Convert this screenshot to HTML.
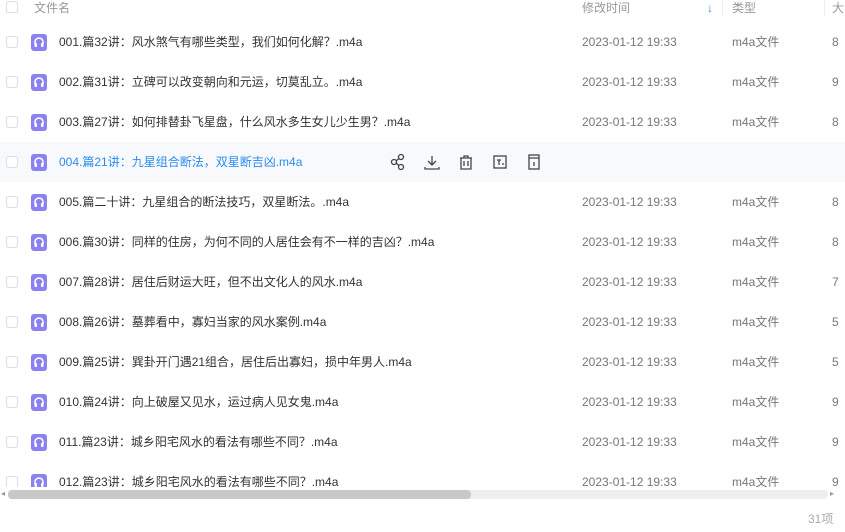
<!DOCTYPE html>
<html><head><meta charset="utf-8"><style>
*{margin:0;padding:0;box-sizing:border-box}
body{width:845px;height:532px;overflow:hidden;background:#fff;font-family:"Liberation Sans","Noto Sans CJK SC",sans-serif;font-size:12px;line-height:16px;color:#333;position:relative}
.a{position:absolute;white-space:nowrap;line-height:16px}
.cb{position:absolute;left:6px;width:12px;height:12px;border:1px solid #dcdfe6;border-radius:2px;background:#fff}
.ic{position:absolute;left:31px;width:16px;height:17px;background:#8b82f0;border-radius:3px}
.ic svg{position:absolute;left:2px;top:2px}
.h{color:#999}
.d{color:#777;left:582px}
.t{color:#777;left:732px}
.s{color:#777;left:832px}
</style></head><body>
<div class="a" style="left:0;top:142px;width:845px;height:40px;background:#f8f9fc"></div>
<div class="cb" style="top:1px"></div>
<div class="a h" style="left:34px;top:0px">文件名</div>
<div class="a h" style="left:582px;top:0px">修改时间</div>
<div class="a" style="left:707px;top:0px;color:#2a8cf0">↓</div>
<div class="a" style="left:722px;top:0;width:1px;height:16px;background:#eee"></div>
<div class="a h" style="left:732px;top:0px">类型</div>
<div class="a" style="left:824px;top:0;width:1px;height:16px;background:#eee"></div>
<div class="a h" style="left:832px;top:0px">大</div>

<div id="rows"></div>
<script>
var n=["001.篇32讲：风水煞气有哪些类型，我们如何化解？.m4a","002.篇31讲：立碑可以改变朝向和元运，切莫乱立。.m4a","003.篇27讲：如何排替卦飞星盘，什么风水多生女儿少生男？.m4a","004.篇21讲：九星组合断法，双星断吉凶.m4a","005.篇二十讲：九星组合的断法技巧，双星断法。.m4a","006.篇30讲：同样的住房，为何不同的人居住会有不一样的吉凶？.m4a","007.篇28讲：居住后财运大旺，但不出文化人的风水.m4a","008.篇26讲：墓葬看中，寡妇当家的风水案例.m4a","009.篇25讲：巽卦开门遇21组合，居住后出寡妇，损中年男人.m4a","010.篇24讲：向上破屋又见水，运过病人见女鬼.m4a","011.篇23讲：城乡阳宅风水的看法有哪些不同？.m4a","012.篇23讲：城乡阳宅风水的看法有哪些不同？.m4a"];
var s="898-88755999";var h="";
for(var i=0;i<12;i++){var y=34+i*40;var hv=i==3;
h+='<div class="cb" style="top:'+(y+2)+'px"></div><div class="ic" style="top:'+y+'px"><svg width="12" height="12" viewBox="0 0 12 12"><path d="M2 8V6a4 4 0 0 1 8 0v2" stroke="#fff" stroke-width="1.6" fill="none"/><rect x="1.5" y="7" width="2.5" height="4" rx="1" fill="#fff"/><rect x="8" y="7" width="2.5" height="4" rx="1" fill="#fff"/></svg></div>';
h+='<div class="a" style="left:59px;top:'+y+'px;'+(hv?'color:#2a8cf0':'')+'">'+n[i]+'</div>';
if(!hv){h+='<div class="a d" style="top:'+y+'px">2023-01-12 19:33</div><div class="a t" style="top:'+y+'px">m4a文件</div><div class="a s" style="top:'+y+'px">'+s[i]+'</div>';}
}
document.getElementById('rows').outerHTML=h;
</script>
<svg class="a" style="left:390px;top:153px" width="155" height="18" viewBox="0 0 155 18" fill="none" stroke="#444" stroke-width="1.3">
<circle cx="4" cy="9" r="2.5"/><circle cx="11" cy="4" r="2.5"/><circle cx="11" cy="14" r="2.5"/><path d="M6 8l3-2.5M6 10l3 2.5"/>
<path d="M42 3v9M38 8l4 4 4-4M35 14v2h14v-2"/>
<path d="M70 5h12M74 5V3h4v2M71 5v11h10V5M74 8v5M78 8v5"/>
<rect x="104" y="3" width="12" height="12"/><path d="M107 7h4M109 7v5M112 11h2"/>
<rect x="139" y="2" width="10" height="14"/><path d="M139 5h10M144 9v4"/>
</svg>
<div class="a" style="left:0;top:487px;width:845px;height:16px;background:#fff"></div>
<div class="a" style="left:8px;top:490px;width:820px;height:9px;background:#eee;border-radius:4px"></div>
<div class="a" style="left:1px;top:486px;font-size:8px;color:#999">◂</div>
<div class="a" style="left:8px;top:490px;width:463px;height:9px;background:#c8c8c8;border-radius:4px"></div>
<div class="a" style="left:830px;top:486px;font-size:8px;color:#999">▸</div>
<div class="a" style="left:808px;top:511px;color:#aaa">31项</div>
</body></html>
